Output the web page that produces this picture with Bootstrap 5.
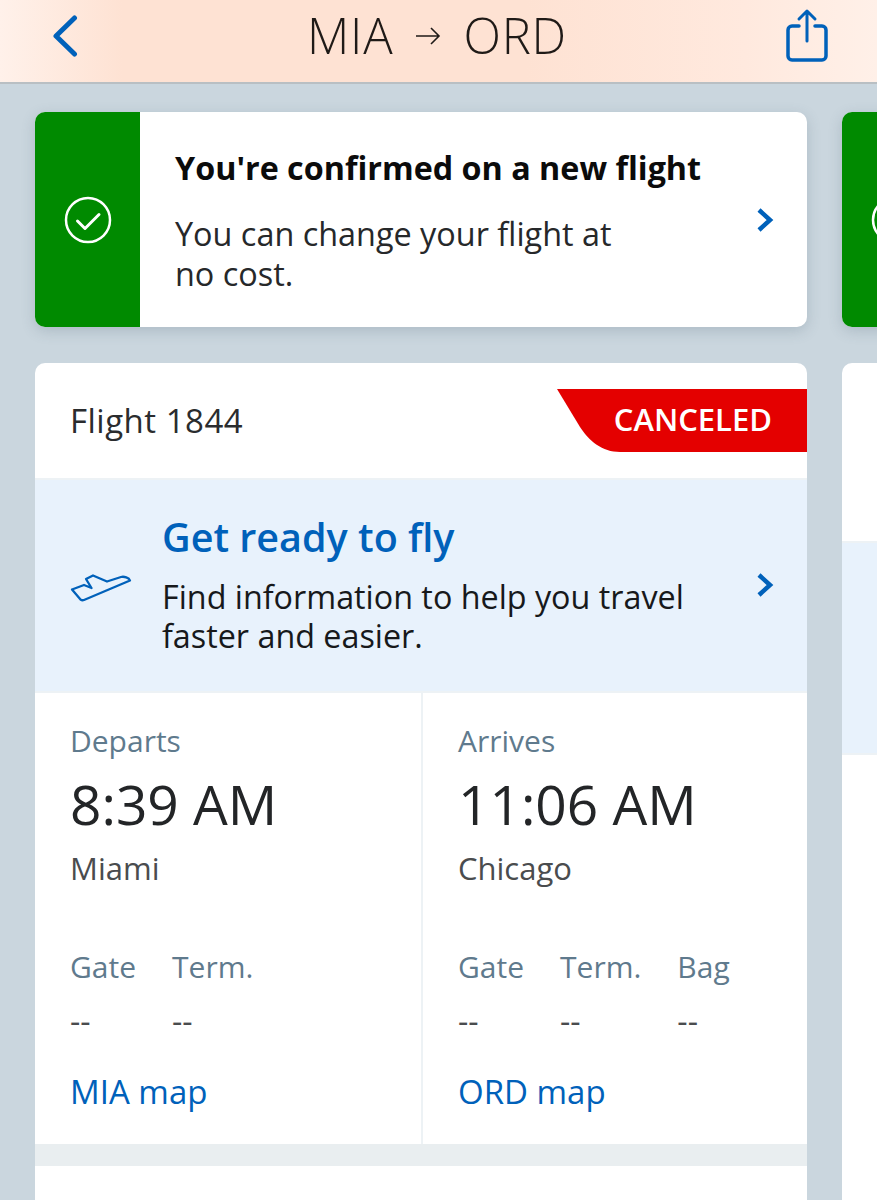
<!DOCTYPE html>
<html lang="en">
<head>
  <meta charset="UTF-8">
  <meta name="viewport" content="width=device-width, initial-scale=1.0">
  <title>MIA to ORD</title>
  <link href="https://cdn.jsdelivr.net/npm/bootstrap@5.3.0/dist/css/bootstrap.min.css" rel="stylesheet">
  <style>
    html, body { height: 1200px; overflow: hidden; }
    body { background: #cad6de; font-family: "Open Sans", "Noto Sans", sans-serif; color: #1d1d1f; }

    .top-bar { height: 84px; background: linear-gradient(90deg, #fff1ea 0%, #fee2d3 14%, #fee2d3 60%, #ffe9de 85%, #fff0e8 100%); border-bottom: 2px solid #b9bfc3; padding: 0 49px 0 52px; }
    .route { font-size: 49px; font-weight: 300; letter-spacing: .8px; line-height: 1; color: #1f1a17; margin: -11px 0 0 10px; }
    .route-arrow { margin: 0 22px; }
    .back-icon { margin-top: -11px; }
    .share-icon { margin-top: -13px; }

    .slider { padding: 28px 0 0 35px; gap: 35px; width: 1700px; }
    .slide { width: 772px; flex: none; }

    .notice { height: 215px; border-radius: 10px; overflow: hidden; background: #fff; box-shadow: 0 4px 14px rgba(70, 90, 110, .22); margin-bottom: 36px; }
    .notice-side { width: 105px; background: #008a00; }
    .notice-title { font-size: 32.300px; font-weight: 700; color: #0b0b0b; line-height: 40px; margin-bottom: 26px; white-space: nowrap; }
    .notice-text { font-size: 32.400px; line-height: 40px; color: #26282a; }
    .notice-body { padding: 35px 0 0 35px; width: 570px; }
    .notice-chevron { right: 33px; top: 95px; }

    .trip { background: #fff; border-radius: 10px 10px 0 0; height: 900px; overflow: hidden; }
    .trip-head { height: 117px; border-bottom: 2px solid #edf2f5; padding: 0 0 0 35px; }
    .flight-no { font-size: 33px; letter-spacing: .5px; color: #2a2c2e; }
    .status-tag { top: 26px; right: 0; }
    .status-text { top: 25px; right: 35px; height: 63px; color: #fff; font-size: 31px; line-height: 63px; font-weight: 600; }

    .ready { height: 211px; background: #e8f2fc; padding-left: 35px; }
    .ready-icon { width: 92px; padding-top: 4px; }
    .ready-copy { margin-top: -3px; }
    .ready-title { font-size: 39.500px; font-weight: 600; color: #0061ba; line-height: 46px; margin-bottom: 17px; }
    .ready-text { font-size: 32.300px; line-height: 39px; color: #17191b; }
    .ready-chevron { right: 33px; top: 92px; }

    .times { height: 453px; border-top: 2px solid #edf2f5; }
    .time-col { padding: 29px 0 0 35px; }
    .time-col + .time-col { border-left: 2px solid #edf2f5; }
    .time-label { font-size: 30px; line-height: 38px; color: #5f7a8d; }
    .time-value { font-size: 55px; line-height: 70px; color: #232527; margin-top: 9px; }
    .time-city { font-size: 31px; line-height: 38px; color: #4a4c4e; margin-top: 10px; }
    .gates { margin-top: 61px; gap: 36px; }
    .dashes { font-size: 32px; line-height: 38px; color: #4a4c4e; margin-top: 16px; }
    .map-link { font-size: 33px; line-height: 40px; color: #0061ba; text-decoration: none; display: inline-block; margin-top: 32px; }
    .gap-bar { height: 22px; background: #e9eef0; }

    .side-band { height: 214px; margin-top: 178px; background: #e8f2fc; border-top: 2px solid #edf2f5; border-bottom: 2px solid #edf2f5; }
  </style>
</head>
<body>

  <!-- Header -->
  <header class="top-bar d-flex align-items-center justify-content-between">
    <svg class="back-icon" width="26" height="42" viewBox="0 0 26 42" fill="none" stroke="#0061ba" stroke-width="5" stroke-linecap="round" stroke-linejoin="round"><path d="M22.500 3 4 21 22.500 39"/></svg>
    <div class="route d-flex align-items-center">
      <span>MIA</span>
      <svg class="route-arrow" width="26" height="20" viewBox="0 0 26 20" fill="none" stroke="#1f1a17" stroke-width="1.600"><path d="M1 10H24M16 2l8 8-8 8"/></svg>
      <span>ORD</span>
    </div>
    <svg class="share-icon" width="42" height="54" viewBox="0 0 42 54" fill="none" stroke="#0061ba" stroke-linecap="round" stroke-linejoin="round"><path stroke-width="3.500" d="M13 18H6a4 4 0 0 0-4 4v26a4 4 0 0 0 4 4h30a4 4 0 0 0 4-4V22a4 4 0 0 0-4-4h-7"/><path stroke-width="3" d="M21 33V3M13 11l8-8 8 8"/></svg>
  </header>

  <div class="slider d-flex">
    <!-- Main slide -->
    <div class="slide">
      <div class="notice d-flex position-relative">
        <div class="notice-side d-flex align-items-center justify-content-center">
          <svg width="48" height="48" viewBox="0 0 48 48" fill="none" stroke="#fff"><circle cx="24" cy="24" r="22" stroke-width="2.500"/><path stroke-width="3" stroke-linecap="round" stroke-linejoin="round" d="M13.500 25l7.500 7.500 14-14"/></svg>
        </div>
        <div class="notice-body">
          <div class="notice-title">You're confirmed on a new flight</div>
          <div class="notice-text">You can change your flight at<br>no cost.</div>
        </div>
        <svg class="position-absolute notice-chevron" width="18" height="26" viewBox="0 0 18 26" fill="none" stroke="#0061ba" stroke-width="4.500"><path d="M3 3l11 10L3 23"/></svg>
      </div>

      <div class="trip">
        <div class="trip-head d-flex align-items-center position-relative">
          <span class="flight-no">Flight 1844</span>
          <svg class="position-absolute status-tag" width="250" height="63" viewBox="0 0 250 63"><path fill="#e40000" d="M0 0H250V63H63C45 63 32 52 23 38Z"/></svg>
          <span class="position-absolute status-text">CANCELED</span>
        </div>
        <div class="ready d-flex align-items-center position-relative">
          <div class="ready-icon">
            <svg width="62" height="28" viewBox="0 0 62 28" fill="none" stroke="#0061ba" stroke-width="2.300" stroke-linejoin="round"><path d="M2 15.500 14 11l7.500 3L16 5l7-3.500 14 6 14-4.500c3-.8 8 .5 9 3.500L14 26c-1.500.5-2.500.2-3.500-.5Z"/></svg>
          </div>
          <div class="ready-copy">
            <div class="ready-title">Get ready to fly</div>
            <div class="ready-text">Find information to help you travel<br>faster and easier.</div>
          </div>
          <svg class="position-absolute ready-chevron" width="18" height="26" viewBox="0 0 18 26" fill="none" stroke="#0061ba" stroke-width="4.500"><path d="M3 3l11 10L3 23"/></svg>
        </div>
        <div class="times row g-0">
          <div class="col-6 time-col">
            <div class="time-label">Departs</div>
            <div class="time-value">8:39 AM</div>
            <div class="time-city">Miami</div>
            <div class="gates d-flex">
              <div><div class="time-label">Gate</div><div class="dashes">--</div></div>
              <div><div class="time-label">Term.</div><div class="dashes">--</div></div>
            </div>
            <a href="#" class="map-link">MIA map</a>
          </div>
          <div class="col-6 time-col">
            <div class="time-label">Arrives</div>
            <div class="time-value">11:06 AM</div>
            <div class="time-city">Chicago</div>
            <div class="gates d-flex">
              <div><div class="time-label">Gate</div><div class="dashes">--</div></div>
              <div><div class="time-label">Term.</div><div class="dashes">--</div></div>
              <div><div class="time-label">Bag</div><div class="dashes">--</div></div>
            </div>
            <a href="#" class="map-link">ORD map</a>
          </div>
        </div>
        <div class="gap-bar"></div>
      </div>
    </div>

    <!-- Next slide, only its edge shows -->
    <div class="slide">
      <div class="notice d-flex">
        <div class="notice-side d-flex align-items-center justify-content-center">
          <svg width="48" height="48" viewBox="0 0 48 48" fill="none" stroke="#fff"><circle cx="24" cy="24" r="22" stroke-width="2.500"/><path stroke-width="3" stroke-linecap="round" stroke-linejoin="round" d="M13.500 25l7.500 7.500 14-14"/></svg>
        </div>
      </div>
      <div class="trip"><div class="side-band"></div></div>
    </div>
  </div>

</body>
</html>
